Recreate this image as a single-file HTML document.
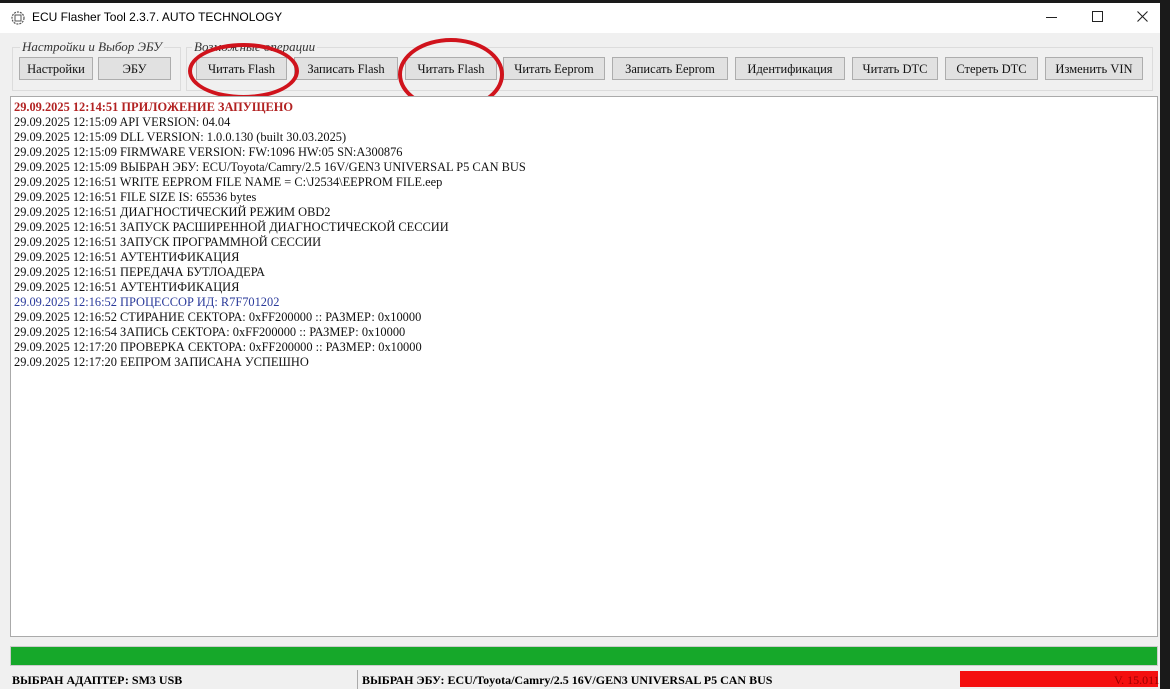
<!DOCTYPE html>
<html><head><meta charset="utf-8"><style>
body{margin:0;width:1170px;height:689px;background:#1a1a1a;overflow:hidden;position:relative;font-family:"Liberation Serif",serif}
.win{position:absolute;left:0;top:3px;width:1160px;height:686px;background:#f0f0f0}
.title{position:absolute;left:0;top:0;width:1160px;height:30px;background:#fff;font-family:"Liberation Sans",sans-serif;font-size:12px}
.title span{position:absolute;left:32px;top:7px}
.grp{position:absolute;border:1px solid #dcdcdc;top:44px;height:42px}
.gl{position:absolute;top:36px;font-style:italic;font-size:13px;color:#333;background:#f0f0f0;padding:0 2px}
.b{position:absolute;top:54px;height:23px;border:1px solid #adadad;background:#e1e1e1;font-size:12.5px;text-align:center;line-height:23px;box-sizing:border-box;color:#111}
.log{position:absolute;left:10px;top:93px;width:1148px;height:541px;background:#fff;border:1px solid #aaa;box-sizing:border-box;padding:3px 0 0 3px;font-size:12.4px;line-height:15px;color:#111}
.red{color:#b22222;font-weight:bold}.blue{color:#2a3a9a}
.prog{position:absolute;left:10px;top:643px;width:1148px;height:20px;background:#16a82a;border:1px solid #ccc;box-sizing:border-box}
.st{position:absolute;top:668px;height:18px;font-size:12px;font-weight:bold;line-height:18px}
.c{position:absolute;width:12px;border:4px solid #d0131c;border-radius:50%}
</style></head><body>
<div class="win">
<div class="title"><svg style="position:absolute;left:10px;top:7px" width="16" height="16"><circle cx="8" cy="8" r="6" fill="none" stroke="#555" stroke-width="1.2" stroke-dasharray="2 1"/><rect x="5" y="5" width="6" height="6" fill="none" stroke="#555"/></svg><span>ECU Flasher Tool 2.3.7. AUTO TECHNOLOGY</span>
<div style="position:absolute;left:1046px;top:14px;width:11px;height:1px;background:#222"></div>
<div style="position:absolute;left:1092px;top:8px;width:9px;height:9px;border:1px solid #222"></div>
<svg style="position:absolute;left:1137px;top:8px" width="11" height="11"><path d="M0.5 0.5L10.5 10.5M10.5 0.5L0.5 10.5" stroke="#222" stroke-width="1.1"/></svg></div>
<div class="grp" style="left:12px;width:167px"></div>
<div class="grp" style="left:186px;width:965px"></div>
<div class="gl" style="left:20px">Настройки и Выбор ЭБУ</div>
<div class="gl" style="left:192px">Возможные операции</div>
<div class="b" style="left:19px;width:74px">Настройки</div>
<div class="b" style="left:98px;width:73px">ЭБУ</div>
<div class="b" style="left:196px;width:91px">Читать Flash</div>
<div class="b" style="left:294px;width:104px">Записать Flash</div>
<div class="b" style="left:405px;width:92px">Читать Flash</div>
<div class="b" style="left:503px;width:102px">Читать Eeprom</div>
<div class="b" style="left:612px;width:116px">Записать Eeprom</div>
<div class="b" style="left:735px;width:110px">Идентификация</div>
<div class="b" style="left:852px;width:86px">Читать DTC</div>
<div class="b" style="left:945px;width:93px">Стереть DTC</div>
<div class="b" style="left:1045px;width:98px">Изменить VIN</div>
<div class="c" style="left:188px;top:40px;width:103px;height:48px"></div>
<div class="c" style="left:398px;top:35px;width:98px;height:65px"></div>
<div class="log">
<div class="red">29.09.2025 12:14:51 ПРИЛОЖЕНИЕ ЗАПУЩЕНО</div>
<div>29.09.2025 12:15:09 API VERSION: 04.04</div>
<div>29.09.2025 12:15:09 DLL VERSION: 1.0.0.130 (built 30.03.2025)</div>
<div>29.09.2025 12:15:09 FIRMWARE VERSION: FW:1096 HW:05 SN:A300876</div>
<div>29.09.2025 12:15:09 ВЫБРАН ЭБУ: ECU/Toyota/Camry/2.5 16V/GEN3 UNIVERSAL P5 CAN BUS</div>
<div>29.09.2025 12:16:51 WRITE EEPROM FILE NAME = C:\J2534\EEPROM FILE.eep</div>
<div>29.09.2025 12:16:51 FILE SIZE IS: 65536 bytes</div>
<div>29.09.2025 12:16:51 ДИАГНОСТИЧЕСКИЙ РЕЖИМ OBD2</div>
<div>29.09.2025 12:16:51 ЗАПУСК РАСШИРЕННОЙ ДИАГНОСТИЧЕСКОЙ СЕССИИ</div>
<div>29.09.2025 12:16:51 ЗАПУСК ПРОГРАММНОЙ СЕССИИ</div>
<div>29.09.2025 12:16:51 АУТЕНТИФИКАЦИЯ</div>
<div>29.09.2025 12:16:51 ПЕРЕДАЧА БУТЛОАДЕРА</div>
<div>29.09.2025 12:16:51 АУТЕНТИФИКАЦИЯ</div>
<div class="blue">29.09.2025 12:16:52 ПРОЦЕССОР ИД: R7F701202</div>
<div>29.09.2025 12:16:52 СТИРАНИЕ СЕКТОРА: 0xFF200000 :: РАЗМЕР: 0x10000</div>
<div>29.09.2025 12:16:54 ЗАПИСЬ СЕКТОРА: 0xFF200000 :: РАЗМЕР: 0x10000</div>
<div>29.09.2025 12:17:20 ПРОВЕРКА СЕКТОРА: 0xFF200000 :: РАЗМЕР: 0x10000</div>
<div>29.09.2025 12:17:20 ЕЕПРОМ ЗАПИСАНА УСПЕШНО</div>
</div>
<div class="prog"></div>
<div style="position:absolute;left:357px;top:667px;width:1px;height:19px;background:#aaa"></div>
<div style="position:absolute;left:960px;top:668px;width:198px;height:16px;background:#f40f0f"></div>
<div class="st" style="left:12px">ВЫБРАН АДАПТЕР: SM3 USB</div>
<div class="st" style="left:362px">ВЫБРАН ЭБУ: ECU/Toyota/Camry/2.5 16V/GEN3 UNIVERSAL P5 CAN BUS</div>
<div class="st" style="left:1114px;color:#900;font-weight:normal">V. 15.011</div>
</div>
</body></html>
